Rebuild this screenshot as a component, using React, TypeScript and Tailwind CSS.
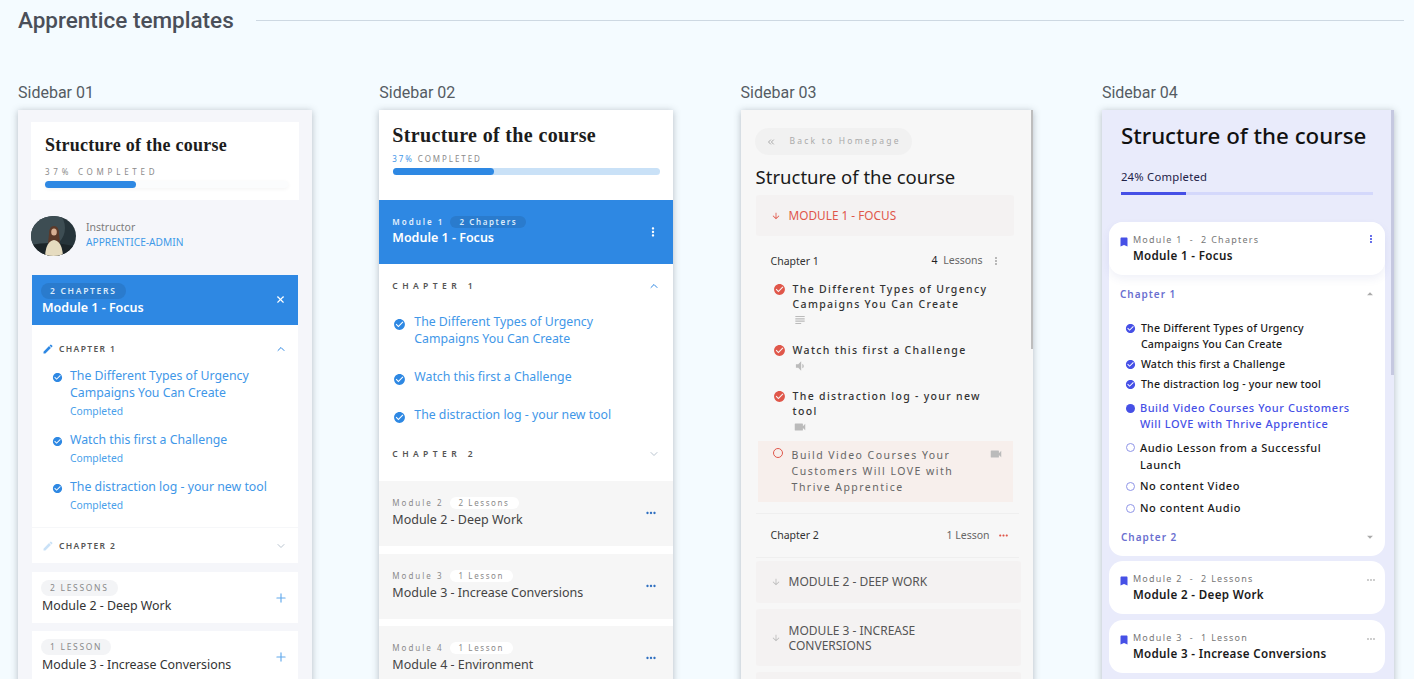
import { ChevronDown, ChevronUp, ChevronsLeft, Plus, X } from "lucide-react";
import {
  MdArrowDownward,
  MdArrowDropDown,
  MdArrowDropUp,
  MdBookmark,
  MdCheckCircle,
  MdEdit,
  MdMoreHoriz,
  MdMoreVert,
  MdSubject,
  MdVideocam,
  MdVolumeDown,
} from "react-icons/md";

const SERIF = "font-['Liberation_Serif',serif]";

const Avatar = () => (
  <svg viewBox="0 0 45 40" className="h-[40px] w-[45px] shrink-0 rounded-[50%]">
    <rect width="45" height="40" fill="#26343a" />
    <ellipse cx="14" cy="12" rx="20" ry="20" fill="#3d4d53" />
    <path d="M0 29 Q22 24 45 31 V40 H0Z" fill="#1c2529" />
    <path d="M18 18 Q18 10 23 10 Q28 10 28 18 L29 27 H17Z" fill="#5b3a2a" />
    <ellipse cx="23" cy="16" rx="2.8" ry="3.6" fill="#d8b094" />
    <path d="M14 40 Q15 25 23 24 Q31 25 32 40Z" fill="#e6dcc0" />
  </svg>
);

const Check = ({ className }: { className: string }) => (
  <MdCheckCircle className={className} />
);

const Pill = ({ className, children }: { className: string; children: string }) => (
  <span className={`block w-fit rounded-full text-[8.5px] leading-[16px] ${className}`}>{children}</span>
);

const Sidebar01 = () => {
  const lessons = [
    ["The Different Types of Urgency", "Campaigns You Can Create"],
    ["Watch this first a Challenge"],
    ["The distraction log - your new tool"],
  ];
  return (
    <div className="h-[600px] w-[294px] bg-[#f5f6fa] px-[13px] pt-[12px] shadow-[0_1px_7px_rgba(60,70,80,0.35)]">
      <div className="h-[78px] bg-white px-[14px] pt-[13px]">
        <h3 className={`${SERIF} text-[18px] leading-[20px] font-bold tracking-[0.26px] text-[#1c1c1c]`}>Structure of the course</h3>
        <p className="mt-[12px] text-[8px] leading-[10px] tracking-[0.47em] text-[#8b8b8b]">37% COMPLETED</p>
        <div className="mt-[4px] h-[7px] w-[243px] rounded-full bg-[#fbfcfd] shadow-[0_1px_4px_rgba(0,0,0,0.05)]">
          <div className="h-full w-[91px] rounded-full bg-[#2e88e3]" />
        </div>
      </div>
      <div className="mt-[16px] flex h-[40px] items-center gap-[10px]">
        <Avatar />
        <div className="-mt-[2px]">
          <p className="text-[10.5px] leading-[15px] text-[#7c7c7c]">Instructor</p>
          <p className="text-[10.2px] leading-[15px] text-[#3f9ae8]">APPRENTICE-ADMIN</p>
        </div>
      </div>
      <div className="mt-[19px] ml-px flex h-[50px] w-[266px] justify-between bg-[#2e88e3] pt-[8px] pr-[12px] pl-[9px]">
        <div>
          <Pill className="bg-[#2a7bcd] px-[9px] font-semibold tracking-[0.2em] text-[#dcecfb]">2 CHAPTERS</Pill>
          <p className="pl-px text-[12.5px] leading-[17px] font-semibold text-white">Module 1 - Focus</p>
        </div>
        <X className="mt-[11px] h-[11px] w-[11px] text-white" strokeWidth={2.5} />
      </div>
      <div className="ml-px w-[266px] bg-white">
        <div className="flex items-center justify-between pt-[18px] pr-[11px] pl-[10px]">
          <div className="flex items-center gap-[5px]">
            <MdEdit className="h-[12px] w-[12px] text-[#2e88e3]" />
            <span className="text-[8.5px] leading-[12px] font-semibold tracking-[0.16em] text-[#555]">CHAPTER 1</span>
          </div>
          <ChevronUp className="h-[12px] w-[12px] text-[#2e88e3]" />
        </div>
        <div className="flex flex-col gap-[12px] pt-[12px] pl-[20px]">
          {lessons.map((lines) => (
            <div key={lines[0]} className="flex gap-[7px]">
              <Check className="mt-[5px] h-[11px] w-[11px] shrink-0 text-[#2e88e3]" />
              <div>
                {lines.map((line) => (
                  <p key={line} className="text-[12.3px] leading-[17px] whitespace-nowrap text-[#3f97e8]">{line}</p>
                ))}
                <p className="mt-[2px] text-[10.3px] leading-[16px] text-[#4a9fea]">Completed</p>
              </div>
            </div>
          ))}
        </div>
        <div className="mt-[14px] flex h-[36px] items-center justify-between border-t border-[#f6f7f9] pr-[11px] pl-[10px]">
          <div className="flex items-center gap-[5px]">
            <MdEdit className="h-[12px] w-[12px] text-[#c9e1f7]" />
            <span className="text-[8.5px] leading-[12px] font-semibold tracking-[0.16em] text-[#555]">CHAPTER 2</span>
          </div>
          <ChevronDown className="h-[12px] w-[12px] text-[#b9c4cf]" />
        </div>
      </div>
      <div className="mt-[9px] ml-px flex h-[51px] w-[266px] justify-between bg-white pt-[8px] pr-[10px] pl-[9px]">
        <div>
          <Pill className="bg-[#f3f4f6] px-[9px] tracking-[0.2em] text-[#8a8a8a]">2 LESSONS</Pill>
          <p className="mt-px pl-px text-[12.4px] leading-[17px] text-[#333]">Module 2 - Deep Work</p>
        </div>
        <Plus className="mt-[11px] h-[14px] w-[14px] text-[#62a9ec]" />
      </div>
      <div className="mt-[8px] ml-px flex h-[60px] w-[266px] justify-between bg-white pt-[8px] pr-[10px] pl-[9px]">
        <div>
          <Pill className="bg-[#f3f4f6] px-[9px] tracking-[0.2em] text-[#8a8a8a]">1 LESSON</Pill>
          <p className="mt-px pl-px text-[12.4px] leading-[17px] text-[#333]">Module 3 - Increase Conversions</p>
        </div>
        <Plus className="mt-[11px] h-[14px] w-[14px] text-[#62a9ec]" />
      </div>
    </div>
  );
};

const GrayModule = ({ num, pill, title }: { num: string; pill: string; title: string }) => (
  <div className="flex h-[65px] justify-between bg-[#f6f6f6] pt-[16px] pr-[15px] pl-[13px]">
    <div>
      <div className="flex items-center gap-[6px]">
        <span className="text-[8px] leading-[12px] tracking-[0.25em] text-[#8a8a8a]">{num}</span>
        <span className="rounded-full bg-white px-[9px] text-[8px] leading-[12px] tracking-[0.2em] text-[#8a8a8a]">{pill}</span>
      </div>
      <p className="mt-[2px] text-[12.5px] leading-[18px] text-[#444]">{title}</p>
    </div>
    <MdMoreHoriz className="mt-[9px] h-[14px] w-[14px] text-[#2f6fc0]" />
  </div>
);

const Sidebar02 = () => {
  const lessons = [
    { lines: ["The Different Types of Urgency", "Campaigns You Can Create"], top: "pt-[21px]" },
    { lines: ["Watch this first a Challenge"], top: "pt-[21px]" },
    { lines: ["The distraction log - your new tool"], top: "pt-[20px]" },
  ];
  return (
    <div className="h-[600px] w-[294px] bg-white shadow-[0_1px_7px_rgba(60,70,80,0.35)]">
      <div className="h-[90px] pt-[15px] pl-[13px]">
        <h3 className={`${SERIF} text-[20px] leading-[21px] font-bold tracking-[0.35px] text-[#1c1c1c]`}>Structure of the course</h3>
        <p className="mt-[8px] text-[8px] leading-[10px] tracking-[0.24em] text-[#8b8b8b]">
          <span className="text-[#3f97e8]">37%</span> COMPLETED
        </p>
        <div className="mt-[4px] ml-px h-[7px] w-[267px] rounded-full bg-[#c9e1f7]">
          <div className="h-full w-[101px] rounded-full bg-[#2e88e3]" />
        </div>
      </div>
      <div className="flex h-[64px] items-start justify-between bg-[#2e88e3] pt-[16px] pr-[13px] pl-[13px]">
        <div>
          <div className="flex items-center gap-[6px]">
            <span className="text-[8px] leading-[12px] font-semibold tracking-[0.25em] text-[#e4f0fc]">Module 1</span>
            <span className="rounded-full bg-[#2a7bcd] px-[9px] text-[8px] leading-[12px] font-semibold tracking-[0.2em] text-[#dcecfb]">2 Chapters</span>
          </div>
          <p className="mt-[1px] text-[12.5px] leading-[18px] font-semibold text-white">Module 1 - Focus</p>
        </div>
        <MdMoreVert className="mt-[9px] h-[14px] w-[14px] text-white" />
      </div>
      <div className="h-[217px] pr-[13px] pl-[13px]">
        <div className="flex items-center justify-between pt-[16px]">
          <span className="text-[8.5px] leading-[12px] font-semibold tracking-[0.52em] text-[#555]">CHAPTER 1</span>
          <ChevronUp className="h-[12px] w-[12px] text-[#2e88e3]" />
        </div>
        {lessons.map(({ lines, top }) => (
          <div key={lines[0]} className={`flex gap-[8px] pl-px ${top}`}>
            <Check className="mt-[5px] h-[13px] w-[13px] shrink-0 text-[#2e88e3]" />
            <div>
              {lines.map((line) => (
                <p key={line} className="text-[12.3px] leading-[17px] whitespace-nowrap text-[#3f97e8]">{line}</p>
              ))}
            </div>
          </div>
        ))}
        <div className="flex items-center justify-between pt-[24px]">
          <span className="text-[8.5px] leading-[12px] font-semibold tracking-[0.52em] text-[#555]">CHAPTER 2</span>
          <ChevronDown className="h-[12px] w-[12px] text-[#b9c4cf]" />
        </div>
      </div>
      <div className="flex flex-col gap-[7.5px]">
        <GrayModule num="Module 2" pill="2 Lessons" title="Module 2 - Deep Work" />
        <GrayModule num="Module 3" pill="1 Lesson" title="Module 3 - Increase Conversions" />
        <GrayModule num="Module 4" pill="1 Lesson" title="Module 4 - Environment" />
      </div>
    </div>
  );
};

const Sidebar03 = () => {
  const done = [
    { lines: ["The Different Types of Urgency", "Campaigns You Can Create"], Icon: MdSubject },
    { lines: ["Watch this first a Challenge"], Icon: MdVolumeDown },
    { lines: ["The distraction log - your new", "tool"], Icon: MdVideocam },
  ];
  const current = ["Build Video Courses Your", "Customers Will LOVE with", "Thrive Apprentice"];
  return (
    <div className="relative h-[600px] w-[292px] bg-[#f7f7f7] pt-[18px] pl-[14px] shadow-[0_1px_7px_rgba(60,70,80,0.35)]">
      <div className="absolute top-0 right-0 h-[239px] w-[2px] bg-[#bdbdbd]" />
      <div className="flex h-[27px] w-[157px] items-center rounded-full bg-[#f1f1f1] pl-[11px]">
        <ChevronsLeft className="h-[10px] w-[10px] text-[#999]" />
        <span className="ml-[14px] text-[8.5px] tracking-[0.26em] text-[#aaa]">Back to Homepage</span>
      </div>
      <h3 className="mt-[8px] pl-px text-[18.5px] leading-[27px] font-normal text-[#1a1a1a]">Structure of the course</h3>
      <div className="mt-[5px] ml-px flex h-[41px] w-[258px] items-center rounded-[3px] bg-[#f4f2f2] pl-[15px] text-[#e0574a]">
        <MdArrowDownward className="h-[10px] w-[10px]" />
        <span className="ml-[8px] text-[11.8px]">MODULE 1 - FOCUS</span>
      </div>
      <div className="mt-[17px] flex w-[255px] items-center justify-between pr-[12px] pl-[16px]">
        <span className="text-[10.5px] leading-[16px] text-[#333]">Chapter 1</span>
        <div className="flex items-center gap-[7px]">
          <span className="text-[10.5px] text-[#666]"><span className="mr-[3px] text-[#222]">4</span> Lessons</span>
          <MdMoreVert className="-mr-[4px] h-[12px] w-[12px] text-[#aaa]" />
        </div>
      </div>
      <div className="mt-[13px] flex flex-col gap-[16px]">
        {done.map(({ lines, Icon }) => (
          <div key={lines[0]} className="flex gap-[7px] pl-[18px]">
            <Check className="mt-[1px] h-[13px] w-[13px] shrink-0 text-[#e0574a]" />
            <div>
              {lines.map((line) => (
                <p key={line} className="text-[10.5px] leading-[15px] font-medium tracking-[0.125em] whitespace-nowrap text-[#333]">{line}</p>
              ))}
              <Icon className="mt-px h-[14px] w-[14px] text-[#bbb]" />
            </div>
          </div>
        ))}
      </div>
      <div className="mt-[7px] ml-[3px] flex h-[61px] w-[255px] justify-between bg-[#f7efec] pt-[6px] pr-[10px] pl-[15px]">
        <div className="flex gap-[9px]">
          <span className="mt-[1px] h-[10px] w-[10px] shrink-0 rounded-full border border-[#e0574a]" />
          <div>
            {current.map((line) => (
              <p key={line} className="text-[10.5px] leading-[16px] tracking-[0.14em] whitespace-nowrap text-[#666]">{line}</p>
            ))}
          </div>
        </div>
        <MdVideocam className="h-[14px] w-[14px] text-[#bbb]" />
      </div>
      <div className="mt-[11px] ml-[1px] flex h-[45px] w-[263px] items-center justify-between border-y border-[#efefef] pr-[9px] pl-[15px]">
        <span className="text-[10.5px] text-[#333]">Chapter 2</span>
        <div className="flex items-center gap-[7px]">
          <span className="text-[10.5px] text-[#666]">1 Lesson</span>
          <MdMoreHoriz className="h-[13px] w-[13px] text-[#e0574a]" />
        </div>
      </div>
      <div className="mt-[3px] ml-px flex w-[265px] flex-col gap-[6px]">
        <div className="flex h-[42px] items-center rounded-[3px] bg-[#f4f2f2] pl-[15px] text-[#555]">
          <MdArrowDownward className="h-[10px] w-[10px] text-[#bbb]" />
          <span className="ml-[8px] text-[12px]">MODULE 2 - DEEP WORK</span>
        </div>
        <div className="flex h-[57px] items-center rounded-[3px] bg-[#f4f2f2] pl-[15px] text-[#555]">
          <MdArrowDownward className="h-[10px] w-[10px] text-[#bbb]" />
          <span className="ml-[8px] text-[12px] leading-[15px]">MODULE 3 - INCREASE<br />CONVERSIONS</span>
        </div>
        <div className="h-[40px] rounded-[3px] bg-[#f4f2f2]" />
      </div>
    </div>
  );
};

const Sidebar04Module = ({ meta, title }: { meta: string; title: string }) => (
  <div className="flex h-[53px] justify-between rounded-[14px] bg-white pt-[12px] pr-[8px] pl-[9px]">
    <div className="flex gap-[3px]">
      <MdBookmark className="mt-[2px] h-[12px] w-[12px] text-[#4650e6]" />
      <div>
        <p className="text-[9px] leading-[12px] tracking-[0.14em] whitespace-pre text-[#777]">{meta}</p>
        <p className="mt-[2px] text-[11.6px] leading-[16px] font-semibold tracking-[0.03em] text-[#1a1a1a]">{title}</p>
      </div>
    </div>
    <MdMoreHoriz className="mt-px h-[12px] w-[12px] text-[#c4c4c4]" />
  </div>
);

const Bullet = ({ kind }: { kind: string }) => {
  if (kind === "done") return <Check className="mt-[3px] h-[11px] w-[11px] shrink-0 text-[#4650e6]" />;
  if (kind === "current") return <span className="mt-[4px] ml-[1px] h-[9px] w-[9px] shrink-0 rounded-full bg-[#4650e6]" />;
  return <span className="mt-[4px] ml-[1px] h-[9px] w-[9px] shrink-0 rounded-full border border-[#8f95e8]" />;
};

const Sidebar04 = () => {
  const lessons = [
    { kind: "done", lines: ["The Different Types of Urgency", "Campaigns You Can Create"], row: "mt-0", text: "text-[10.6px] leading-[16px] tracking-[0.02em]" },
    { kind: "done", lines: ["Watch this first a Challenge"], row: "mt-[4px]", text: "text-[10.6px] leading-[16px] tracking-[0.02em]" },
    { kind: "done", lines: ["The distraction log - your new tool"], row: "mt-[4px]", text: "text-[10.6px] leading-[16px] tracking-[0.02em]" },
    { kind: "current", lines: ["Build Video Courses Your Customers", "Will LOVE with Thrive Apprentice"], row: "mt-[8px]", text: "text-[11px] leading-[16px] tracking-[0.05em]" },
    { kind: "todo", lines: ["Audio Lesson from a Successful", "Launch"], row: "mt-[7px]", text: "text-[11px] leading-[17px] tracking-[0.05em]" },
    { kind: "todo", lines: ["No content Video"], row: "mt-[5px]", text: "text-[11px] leading-[16px] tracking-[0.05em]" },
    { kind: "todo", lines: ["No content Audio"], row: "mt-[6px]", text: "text-[11px] leading-[16px] tracking-[0.05em]" },
  ];
  return (
    <div className="relative h-[600px] w-[292px] bg-[#e9ebfb] shadow-[0_1px_7px_rgba(60,70,80,0.35)]">
      <div className="absolute top-0 right-0 h-[265px] w-[3px] bg-[#c5c8e0]" />
      <div className="h-[112px] pt-[11px] pl-[19px]">
        <h3 className="text-[22.3px] leading-[30px] font-medium text-[#111]">Structure of the course</h3>
        <p className="mt-[18px] text-[11.3px] leading-[16px] tracking-[0.02em] text-[#222247]">24% Completed</p>
        <div className="mt-[7px] h-[3px] w-[252px] bg-[#d4d8fb]">
          <div className="h-full w-[65px] bg-[#4650e6]" />
        </div>
      </div>
      <div className="ml-[7px] w-[276px] rounded-[14px] bg-white pb-[12px]">
        <div className="flex h-[53px] justify-between rounded-[14px] bg-white pt-[12px] pr-[8px] pl-[9px] shadow-[0_4px_8px_rgba(70,80,160,0.08)]">
          <div className="flex gap-[3px]">
            <MdBookmark className="mt-[2px] h-[12px] w-[12px] text-[#4650e6]" />
            <div>
              <p className="text-[9px] leading-[12px] tracking-[0.14em] whitespace-pre text-[#777]">{"Module 1  -  2 Chapters"}</p>
              <p className="mt-[2px] text-[11.6px] leading-[16px] font-semibold tracking-[0.03em] text-[#1a1a1a]">Module 1 - Focus</p>
            </div>
          </div>
          <MdMoreVert className="-mt-[1px] h-[12px] w-[12px] text-[#4650e6]" />
        </div>
        <div className="flex items-center justify-between pt-[12px] pr-[8px] pl-[11px]">
          <span className="text-[10px] leading-[14px] font-semibold tracking-[0.1em] text-[#6a6fd0]">Chapter 1</span>
          <MdArrowDropUp className="h-[14px] w-[14px] text-[#aaa]" />
        </div>
        <div className="flex flex-col pt-[19px] pl-[16px]">
          {lessons.map(({ kind, lines, row, text }) => (
            <div key={lines[0]} className={`flex gap-[5px] ${row}`}>
              <Bullet kind={kind} />
              <div>
                {lines.map((line) => (
                  <p key={line} className={`${text} font-medium whitespace-nowrap ${kind === "current" ? "text-[#4650e6]" : "text-[#1a1a1a]"}`}>{line}</p>
                ))}
              </div>
            </div>
          ))}
        </div>
        <div className="flex items-center justify-between pt-[14px] pr-[8px] pl-[12px]">
          <span className="text-[10px] leading-[14px] font-semibold tracking-[0.1em] text-[#6a6fd0]">Chapter 2</span>
          <MdArrowDropDown className="h-[14px] w-[14px] text-[#aaa]" />
        </div>
      </div>
      <div className="mt-[5px] ml-[7px] flex w-[276px] flex-col gap-[6px]">
        <Sidebar04Module meta={"Module 2  -  2 Lessons"} title="Module 2 - Deep Work" />
        <Sidebar04Module meta={"Module 3  -  1 Lesson"} title="Module 3 - Increase Conversions" />
        <div className="h-[40px] rounded-[14px] bg-white" />
      </div>
    </div>
  );
};

export default function App() {
  const columns = [
    { name: "Sidebar 01", panel: <Sidebar01 /> },
    { name: "Sidebar 02", panel: <Sidebar02 /> },
    { name: "Sidebar 03", panel: <Sidebar03 /> },
    { name: "Sidebar 04", panel: <Sidebar04 /> },
  ];

  return (
    <div className="h-[679px] w-[1414px] overflow-hidden bg-[#f4fbff] font-['Noto_Sans',sans-serif]">
      <div className="flex h-[41px] items-center gap-[22px] pr-[10px] pl-[18px] font-['Roboto',sans-serif]">
        <h2 className="text-[22.5px] font-medium text-[#4a4f59]">Apprentice templates</h2>
        <div className="h-px flex-1 bg-[#cdd8e2]" />
      </div>
      <div className="mt-[41px] flex pl-[18px]">
        {columns.map(({ name, panel }) => (
          <div key={name} className="w-[361.3px] shrink-0">
            <p className="h-[28px] font-['Roboto',sans-serif] text-[16px] leading-[21px] text-[#555b63]">{name}</p>
            {panel}
          </div>
        ))}
      </div>
    </div>
  );
}
